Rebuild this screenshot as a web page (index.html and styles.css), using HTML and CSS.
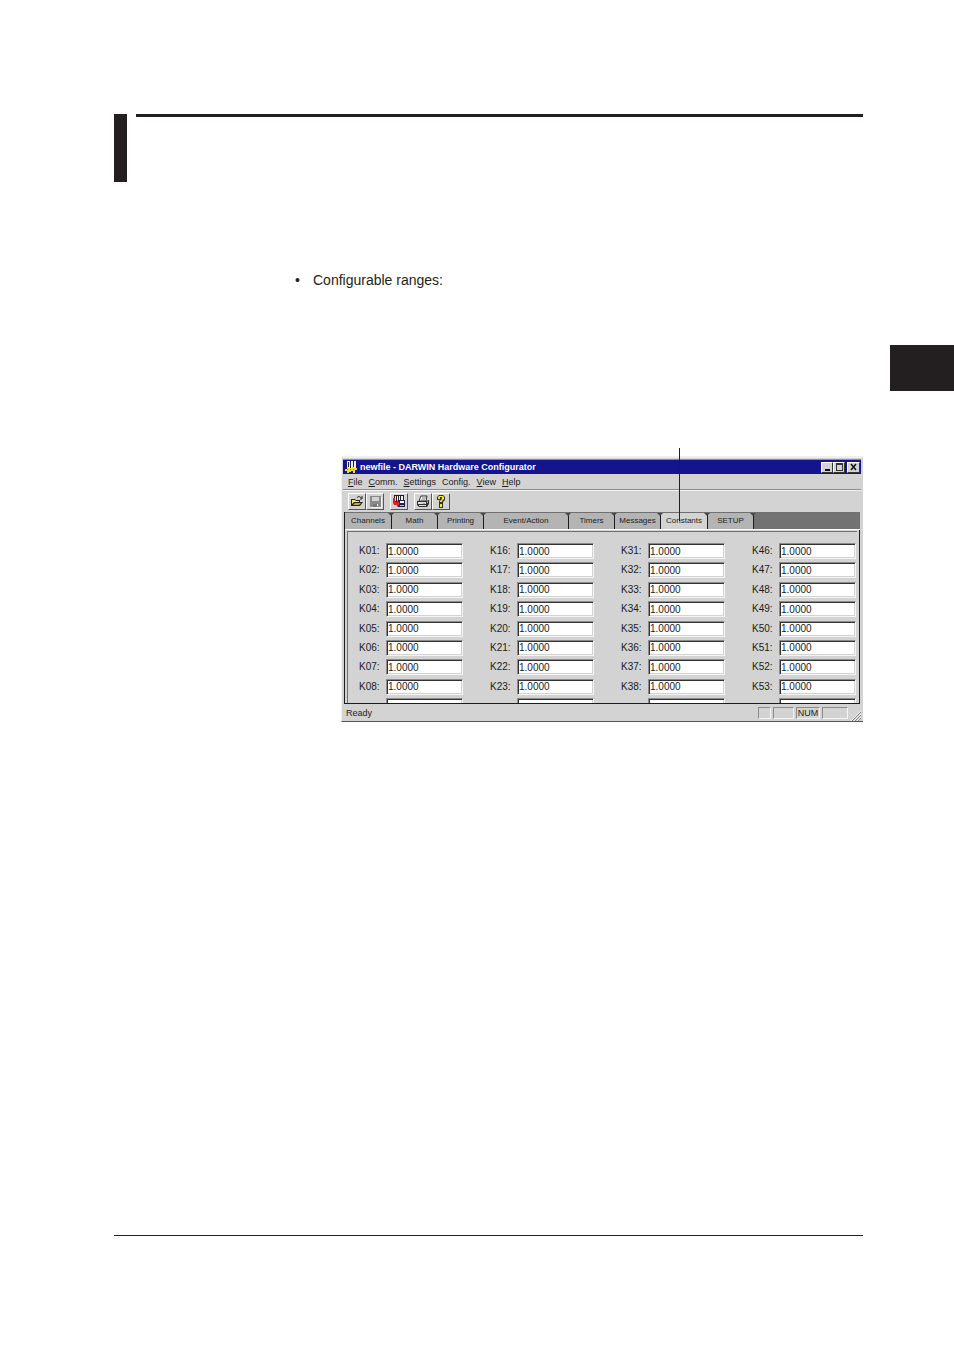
FILE: index.html
```html
<!DOCTYPE html>
<html lang="en">
<head>
<meta charset="utf-8">
<title>DARWIN Hardware Configurator</title>
<link rel="stylesheet" href="styles.css">
</head>
<body>
<main class="page">
  <header class="chapter">
    <div class="chapter-bar"></div>
    <div class="chapter-rule"></div>
  </header>

  <ul class="notes">
    <li>Configurable ranges:</li>
  </ul>

  <div class="thumb-tab"></div>

  <section class="window" aria-label="DARWIN Hardware Configurator">
    <div class="titlebar">
      <svg class="app-icon" width="13" height="13" viewBox="0 0 13 13" aria-hidden="true">
        <path d="M3 0h3v7H3zM7 0h2v8H7zM10 0h2v7h-2z" fill="#f0f0f0"/>
        <path d="M4 1h1v5H4zM9 0h1v7H9zM6 3h1v4H6z" fill="#222"/>
        <path d="M3 6h2v1h3V6h2v1h3v2h-2v3H9v-2H7v1H5v1H3v-2H1V8h2z" fill="#ece02c"/>
        <path d="M3 8h1v1H3zM9 8h1v1H9zM6 8h1v1H6z" fill="#8a8118"/>
      </svg>
      <span class="title">newfile - DARWIN Hardware Configurator</span>
      <button class="caption" aria-label="Minimize"><svg width="9" height="8" viewBox="0 0 9 8"><path d="M2 6h5v2H2z" fill="#111"/></svg></button>
      <button class="caption" aria-label="Maximize"><svg width="9" height="8" viewBox="0 0 9 8"><path d="M1 0h7v8H1zM2 2v5h5V2z" fill="#333" fill-rule="evenodd"/></svg></button>
      <button class="caption close" aria-label="Close"><svg width="9" height="8" viewBox="0 0 9 8"><path d="M2 1l5 6M7 1L2 7" stroke="#111" stroke-width="1.5"/></svg></button>
    </div>

    <nav class="menu">
      <button><u>F</u>ile</button>
      <button><u>C</u>omm.</button>
      <button><u>S</u>ettings</button>
      <button>Confi<u>g</u>.</button>
      <button><u>V</u>iew</button>
      <button><u>H</u>elp</button>
    </nav>

    <div class="toolbar">
      <div class="tools">
        <button aria-label="Open"><svg width="14" height="13" viewBox="0 0 14 13"><path d="M1 4h4l1 1h4v2h3l-3 4H1z" fill="#25250c"/><path d="M2 5h3l1 1h3v1H4L2 9z" fill="#f1ed68"/><path d="M5 8h6l-2 2H3z" fill="#b4b034"/><path d="M7 3c1-2 3-2 4 0M12 1v3h-2" fill="none" stroke="#222"/></svg></button>
        <button aria-label="Save" disabled><svg width="14" height="13" viewBox="0 0 14 13"><path d="M2 1h11v11H3l-1-1z" fill="#8a8a8a"/><path d="M4 2h7v4H4z" fill="#d3d3d3"/><path d="M5 9h4v3H5z" fill="#777"/><path d="M9 9h1v2H9z" fill="#eee"/><path d="M13 2h1v11H3v-1h10z" fill="#f4f4f4"/></svg></button>
      </div>
      <div class="tools">
        <button aria-label="Transfer settings"><svg width="14" height="13" viewBox="0 0 14 13"><path d="M2 0h10v7H2z" fill="#222"/><path d="M3 1h1v5H3zM5 1h1v5H5zM7 1h1v4H7zM9 1h2v4H9z" fill="#eee"/><path d="M6 5h7v7H6z" fill="#20204c"/><path d="M8 6h4v2H8z" fill="#fff"/><path d="M8 10h4v1H8z" fill="#bbb"/><path d="M1 3h2v4h2V5l3 4-3 3v-2H2L1 8z" fill="#e01c24"/></svg></button>
      </div>
      <div class="tools">
        <button aria-label="Print"><svg width="14" height="13" viewBox="0 0 14 13"><path d="M5 1h6l-1 5H3z" fill="#fff" stroke="#333"/><path d="M6 3h4M5 5h4" stroke="#777"/><path d="M1 6h9l3-1v4l-2 3H3l-2-2z" fill="#333"/><path d="M2 7h8v2H2zM3 10h7v1H3z" fill="#ddd"/><path d="M7 8h2v1H7z" fill="#b8b030"/><path d="M11 7l1-1v2h-1z" fill="#bbb"/></svg></button>
        <button aria-label="Help"><svg width="14" height="13" viewBox="0 0 14 13"><path d="M3 2l2-2h4l2 2v3L9 7v1H5V6l1-1H3z" fill="#333"/><path d="M4 2l1-1h4l1 1v2L8 6v1H6V6l2-2V2H6v2H4z" fill="#f0e62c"/><path d="M5 8h4v5H5z" fill="#333"/><path d="M6 9h2v3H6z" fill="#f0e62c"/></svg></button>
      </div>
    </div>

    <div class="work">
      <div class="tabs" role="tablist">
        <button role="tab">Channels</button>
        <button role="tab">Math</button>
        <button role="tab">Printing</button>
        <button role="tab" class="wide">Event/Action</button>
        <button role="tab">Timers</button>
        <button role="tab">Messages</button>
        <button role="tab" aria-selected="true">Constants<span class="callout"></span></button>
        <button role="tab">SETUP</button>
      </div>
      <div class="panel" role="tabpanel">
        <form class="fields" id="fields"></form>
      </div>
    </div>

    <footer class="status">
      <span class="ready">Ready</span>
      <span class="cell tiny"></span>
      <span class="cell small"></span>
      <span class="cell num">NUM</span>
      <span class="cell large"></span>
      <svg class="grip" width="10" height="10" viewBox="0 0 10 10" aria-hidden="true"><path d="M1 10L10 1M4 10l6-6M7 10l3-3" stroke="#888"/><path d="M0 10L10 0M3 10l7-7M6 10l4-4" stroke="#fff" stroke-opacity=".6"/></svg>
    </footer>
  </section>

  <hr class="page-end">
</main>
<script src="fields.js"></script>
</body>
</html>
```
FILE: styles.css
```css
* { box-sizing: border-box; }

body {
  margin: 0;
  background: #fff;
  color: #231f20;
  font-family: "Liberation Sans", Arial, sans-serif;
}

button {
  margin: 0;
  padding: 0;
  border: 0;
  background: none;
  color: inherit;
  font: inherit;
}

.page {
  display: flex;
  flex-direction: column;
  padding: 114px 91px 114px 114px;
}

.chapter { display: flex; gap: 9px; }
.chapter-bar { width: 13px; height: 68px; background: #231f20; }
.chapter-rule { flex: 1; height: 3px; background: #231f20; }

.notes {
  margin: 89px 0 0 181px;
  padding: 0;
  list-style: none;
  font-size: 14px;
  line-height: 18px;
}
.notes li { display: flex; }
.notes li::before { content: "•"; width: 18px; }

.thumb-tab {
  align-self: flex-end;
  width: 64px;
  height: 46px;
  margin: 56px -91px 65px 0;
  background: #231f20;
}

.window {
  margin-left: 227px;
  padding: 1px 2px 0 1px;
  border-top: 2px solid #f0f0f0;
  border-left: 1px solid #f0f0f0;
  border-bottom: 1px solid #555;
  background: #d3d3d3;
  color: #1c1c1c;
  font-size: 9px;
  line-height: 12px;
}

.titlebar {
  display: flex;
  align-items: center;
  height: 15px;
  padding: 0 1px;
  border-top: 1px solid #8c8cb0;
  background: #14148c;
  color: #fff;
}
.title {
  flex: 1;
  margin-left: 3px;
  font-weight: bold;
}
.caption {
  display: grid;
  place-items: center;
  width: 12px;
  height: 11px;
  border: 1px solid;
  border-color: #fff #333 #333 #fff;
  background: #d3d3d3;
}
.close { width: 13px; margin-left: 2px; }

.menu {
  display: flex;
  gap: 6px;
  height: 16px;
  padding-left: 5px;
  border-bottom: 1px solid #8c8c8c;
}

.toolbar {
  display: flex;
  gap: 6px;
  height: 22px;
  padding: 2px 5px;
  border-top: 1px solid #f4f4f4;
}
.tools { display: flex; }
.tools button {
  display: grid;
  place-items: center;
  width: 18px;
  height: 17px;
  border: 1px solid;
  border-color: #fff #555 #555 #fff;
}

.work {
  margin: 0 1px;
  border-left: 1px solid #1c1c1c;
  border-bottom: 1px solid #1c1c1c;
}

.tabs {
  display: flex;
  height: 18px;
  border-top: 1px solid #707070;
  border-bottom: 1px solid #fff;
  background: #727272;
}
.tabs button {
  position: relative;
  width: 46px;
  border-right: 1px solid #1c1c1c;
  background: #b4b4b4;
  font-size: 8px;
  line-height: 14px;
}
.tabs button:first-child,
.tabs button[aria-selected="true"] { width: 47px; }
.tabs .wide { width: 85px; }
/* Folded corner between neighbouring tabs */
.tabs button::after {
  content: "";
  position: absolute;
  top: 0;
  right: -3px;
  z-index: 1;
  border: solid transparent;
  border-width: 3px 3px 0;
  border-top-color: #484848;
}
.tabs button[aria-selected="true"] { background: #d3d3d3; }

/* Leader line that points at the tab from above the window */
.callout {
  position: absolute;
  top: -65px;
  left: 18px;
  width: 1px;
  height: 73px;
  background: #231f20;
}

.panel {
  height: 173px;
  padding: 1px 2px 0;
  border-right: 1px solid #1c1c1c;
  overflow: hidden;
}

.fields {
  display: grid;
  grid-template-rows: repeat(9, 16px);
  grid-template-columns: repeat(4, minmax(0, 1fr));
  grid-auto-flow: column;
  align-content: space-between;
  column-gap: 27px;
  height: 183px;
  padding: 11px 1px 0 11px;
  border-top: 1px solid #707070;
  border-left: 1px solid #707070;
  font-size: 10px;
}
.field { display: flex; align-items: center; }
.field label { width: 27px; }
.field input {
  flex: 1;
  min-width: 0;
  height: 16px;
  padding: 0 1px;
  border: 1px solid;
  border-color: #8c8c8c #f4f4f4 #f4f4f4 #8c8c8c;
  border-radius: 0;
  box-shadow: inset 1px 1px #333, inset -1px -1px #d3d3d3;
  background: #fff;
  color: #1c1c1c;
  font: inherit;
}

.status {
  display: flex;
  align-items: center;
  gap: 2px;
  height: 17px;
  padding: 0 0 0 3px;
}
.ready { flex: 1; }
.cell {
  height: 12px;
  border: 1px solid;
  border-color: #8c8c8c #f4f4f4 #f4f4f4 #8c8c8c;
  line-height: 11px;
  text-align: center;
}
.tiny { width: 13px; }
.small { width: 21px; }
.num { width: 24px; }
.large { width: 26px; }
.grip { align-self: flex-end; margin-left: 1px; }

.page-end {
  width: 100%;
  height: 1px;
  margin: 513px 0 0;
  border: 0;
  background: #231f20;
}
```
FILE: fields.js
```js
// Four columns of eight constants; each ends in a blank row that the panel cuts off.
const form = document.getElementById("fields");
for (const first of [1, 16, 31, 46]) {
  for (let n = first; n < first + 9; n++) {
    const id = "K" + String(n).padStart(2, "0");
    const blank = n === first + 8;
    const row = document.createElement("div");
    row.className = "field";
    row.innerHTML =
      `<label for="${id}">${blank ? "" : id + ":"}</label>` +
      `<input id="${id}" type="text" aria-label="${id}" value="${blank ? "" : "1.0000"}">`;
    form.append(row);
  }
}
```
